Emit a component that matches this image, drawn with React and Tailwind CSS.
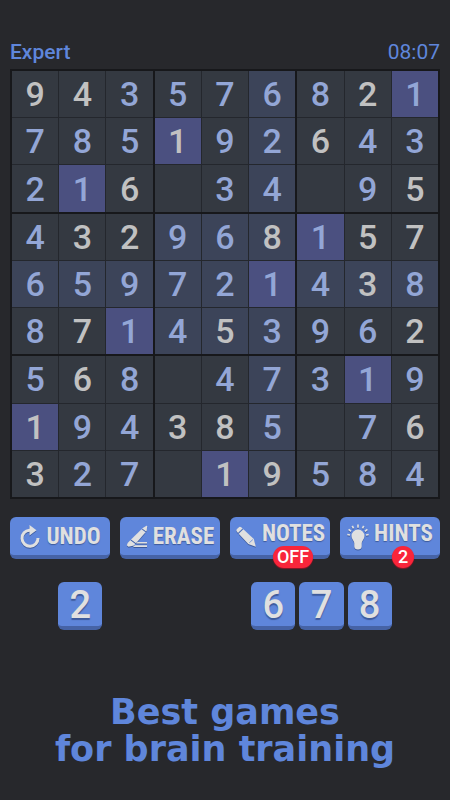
import clsx from 'clsx'

// rows of the board, "." is an empty cell
const board = [
    '943576821',
    '785192643',
    '216.34.95',
    '432968157',
    '659721438',
    '871453962',
    '568.47319',
    '194385.76',
    '327.19584',
]

// x = digit was given at the start, so it can't be edited
const givens = [
    'xx.....x.',
    '...x..x..',
    '..x.....x',
    '.xx..x.xx',
    '.......x.',
    '.x..x...x',
    '.x.......',
    'x..xx...x',
    'x...xx...',
]

const selected = { row: 4, col: 5 }
const remaining = [2, 6, 7, 8]
const three = [0, 1, 2]

function getCellColor(row, col) {
    if (board[row][col] === board[selected.row][selected.col]) return 'bg-[#4b5080]'
    const sameBox = Math.floor(row / 3) === Math.floor(selected.row / 3)
        && Math.floor(col / 3) === Math.floor(selected.col / 3)
    if (row === selected.row || col === selected.col || sameBox) return 'bg-[#3c4459]'
    return 'bg-[#343941]'
}

function Cell({ row, col }) {
    const value = board[row][col]
    return (
        <button
            type="button"
            aria-label={`Row ${row + 1}, column ${col + 1}`}
            className={clsx(
                'flex min-h-0 min-w-0 items-center justify-center text-[34px] leading-none font-medium',
                getCellColor(row, col),
                givens[row][col] === 'x' ? 'text-[#c1c1c1]' : 'text-[#93a6d6]'
            )}
        >
            {value === '.' ? '' : value}
        </button>
    )
}

function Board() {
    return (
        <div className="grid aspect-square grid-cols-3 grid-rows-3 gap-[2px] border-2 border-[#17181b] bg-[#17181b]">
            {three.map((boxRow) => three.map((boxCol) => (
                <div key={`${boxRow}${boxCol}`} className="grid grid-cols-3 grid-rows-3 gap-px bg-[#24272d]">
                    {three.map((r) => three.map((c) => (
                        <Cell key={`${r}${c}`} row={boxRow * 3 + r} col={boxCol * 3 + c} />
                    )))}
                </div>
            )))}
        </div>
    )
}

function UndoIcon() {
    return (
        <svg viewBox="0 0 22 24" className="h-6 w-[22px] shrink-0" aria-hidden="true">
            <path d="M12 5.2H10.500A8 8 0 1 0 19 13" fill="none" stroke="currentColor" strokeWidth="3" />
            <path d="M10.500 0 17.500 5.200 10.500 10.500Z" fill="currentColor" />
        </svg>
    )
}

function EraseIcon() {
    return (
        <svg viewBox="0 0 22 24" className="h-6 w-[22px] shrink-0" fill="currentColor" aria-hidden="true">
            <path d="M16.800 2.900 20.500 0.800Q21.300 0.500 21.200 1.400L20.700 5.700 20.100 6.400 16.100 3.600Z" />
            <path d="M15.500 4.300 19.500 7.200 10 18.300 5 14.500Z" />
            <path d="M4.300 15.300 9.300 19.100 8 20.500 2.500 21.800 0.800 20.300 1.700 18Z" />
            <path d="M11.500 17H21V18.400H10.300ZM8.800 20.300H21V22H7Z" />
        </svg>
    )
}

function NotesIcon() {
    return (
        <svg viewBox="0 0 22 24" className="h-6 w-[22px] shrink-0" fill="currentColor" aria-hidden="true">
            <path d="M1.500 6Q1 5 2 4L4.200 2Q5.200 1.400 6.200 2.300L7.600 3.600 3 8Z" />
            <path d="M8.400 4.300 18.800 14 20.800 21.700 13.300 19 3.700 8.800Z" />
            <path d="M14.300 17.800 17.900 14.500" stroke="#5f86db" strokeWidth="0.800" />
        </svg>
    )
}

function HintsIcon() {
    return (
        <svg viewBox="0 0 22 26" className="h-[26px] w-[22px] shrink-0" fill="currentColor" aria-hidden="true">
            <path d="M11 5.500A6.500 6.500 0 0 0 4.500 12C4.500 15 7 16.500 7.300 19V22.500Q7.500 25.500 11 25.500T14.700 22.500V19C15 16.500 17.500 15 17.500 12A6.500 6.500 0 0 0 11 5.500Z" />
            <path
                d="M11 0.500V3.700M5.300 1.800 6.500 4.400M16.700 1.800 15.500 4.400M1.600 5.400 4 7.200M20.400 5.400 18 7.200M0.300 10.500 3 11M21.700 10.500 19 11"
                stroke="currentColor"
                strokeWidth="1.700"
            />
        </svg>
    )
}

const actions = [
    { name: 'UNDO', icon: <UndoIcon /> },
    { name: 'ERASE', icon: <EraseIcon /> },
    { name: 'NOTES', icon: <NotesIcon />, badge: 'OFF' },
    { name: 'HINTS', icon: <HintsIcon />, badge: '2' },
]

function ActionButton({ name, icon, badge }) {
    return (
        <button
            type="button"
            className="relative flex h-[42px] items-center justify-center gap-[5px] rounded-md border-b-4 border-[#4663a6] bg-[#5f86db] pt-[2px] text-[#e0e0e0]"
        >
            <span className="drop-shadow-[0_1px_0_#3d5a9c]">{icon}</span>
            <span className={clsx(
                "font-['Roboto_Condensed','Liberation_Sans_Narrow',Roboto,sans-serif] text-[23px] leading-6 font-bold [text-shadow:0_1px_1px_#3d5a9c]",
                badge && 'pb-[6px]'
            )}>
                {name}
            </span>
            {badge && (
                <span className={clsx(
                    'absolute top-[29px] left-[63px] flex h-[22px] -translate-x-1/2 items-center justify-center rounded-full bg-[#f9253a] text-lg leading-[22px] font-medium text-white shadow-[0_1px_1px_#8f1526]',
                    badge.length > 1 ? 'w-10' : 'w-[22px]'
                )}>
                    {badge}
                </span>
            )}
        </button>
    )
}

function NumberPad() {
    return (
        <div className="mt-[23px] grid grid-cols-9 gap-1">
            {[1, 2, 3, 4, 5, 6, 7, 8, 9].map((n) => (
                remaining.includes(n) ? (
                    <button
                        key={n}
                        type="button"
                        className="flex h-12 items-center justify-center rounded-md border-b-4 border-[#4663a6] bg-[#5f86db] pt-[2px] text-[38px] leading-none font-medium text-[#e0e0e0] [text-shadow:0_2px_1px_#3d5a9c]"
                    >
                        {n}
                    </button>
                ) : <span key={n} />
            ))}
        </div>
    )
}

export default function App() {
    return (
        <main className="min-h-screen bg-[#27282c] px-[10px] pt-10 pb-8 font-[Roboto,sans-serif]">
            <header className="mb-[5px] flex items-center justify-between text-[21px] leading-6 text-[#5f86db]">
                <h1 className="font-medium">Expert</h1>
                <time>08:07</time>
            </header>
            <Board />
            <div className="mt-[18px] grid grid-cols-4 gap-[10px]">
                {actions.map((action) => <ActionButton key={action.name} {...action} />)}
            </div>
            <NumberPad />
            <p className="mt-16 text-center font-['DejaVu_Sans',sans-serif] text-[35px] leading-[37px] font-bold text-[#5f86db]">
                Best games
                <br />
                for brain training
            </p>
        </main>
    )
}
